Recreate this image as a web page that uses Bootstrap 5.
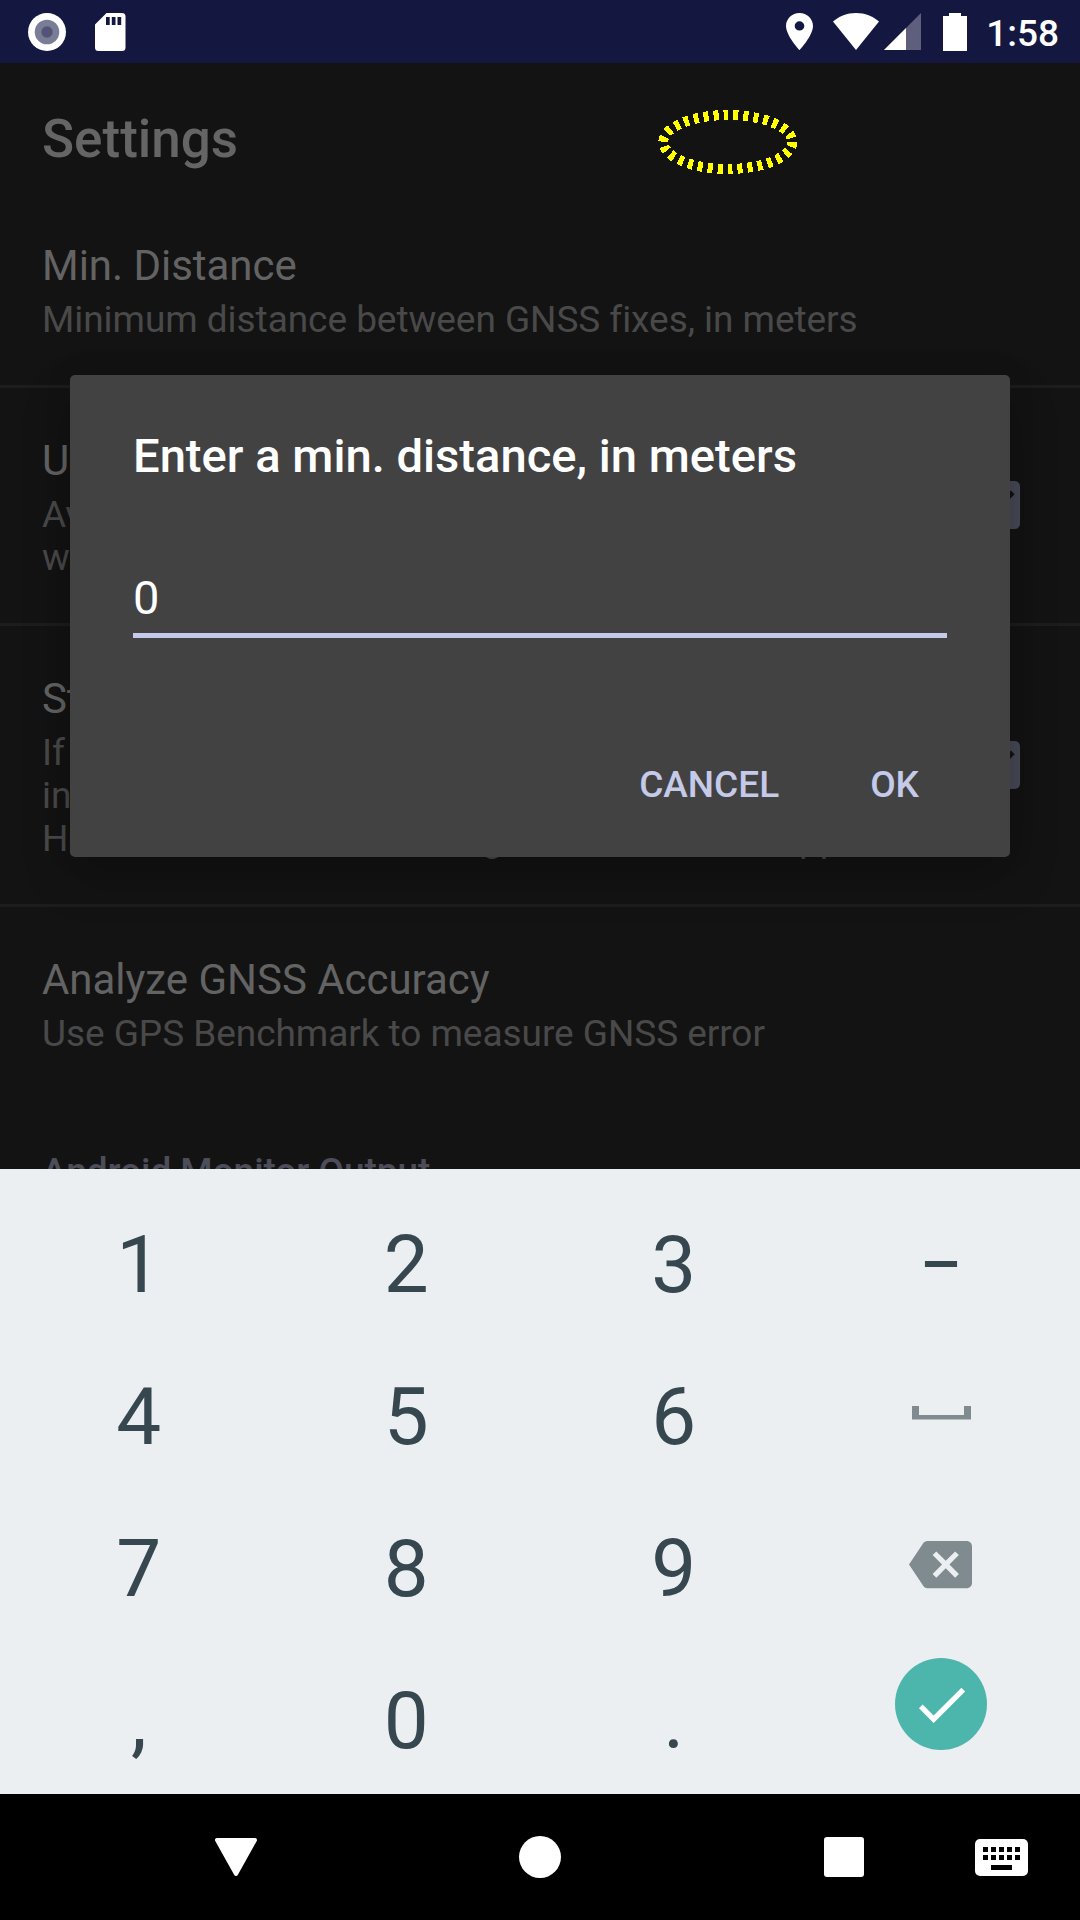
<!DOCTYPE html>
<html lang="en">
<head>
<meta charset="utf-8">
<meta name="viewport" content="width=device-width, initial-scale=1">
<title>Settings</title>
<link href="https://cdn.jsdelivr.net/npm/bootstrap@5.3.0/dist/css/bootstrap.min.css" rel="stylesheet">
<style>
  body { background: #000; font-family: Roboto, "Liberation Sans", sans-serif; }
  svg { display: block; flex: none; }
  .phone { width: 1080px; height: 1920px; }
  .status-bar { height: 63px; background: #141841; padding: 0 21px 0 28px; }
  .sd-icon { margin-left: 29px; }
  .wifi-icon { margin-left: 20px; }
  .cell-icon { margin-left: 5px; }
  .battery-icon { margin-left: 22px; }
  .clock { font-size: 37px; line-height: 63px; font-weight: 500; margin-left: 19px; padding-top: 3px; }
  .screen { height: 1106px; background: #131313; }
  .app-title { height: 147px; padding: 7px 42px 0; font-size: 53px; font-weight: 500; color: #656565; }
  .pref { padding: 48px 42px 44px; border-bottom: 3px solid #1d1d1d; }
  .pref-first { padding-top: 31px; }
  .pref-last { border-bottom: 0; }
  .pref-title { font-size: 42px; line-height: 50px; letter-spacing: -.03px; color: #636363; margin-bottom: 7px; }
  .pref-text { font-size: 37px; line-height: 43px; letter-spacing: -.05px; color: #494949; white-space: nowrap; }
  .pref-text-wide { word-spacing: 2.6px; }
  .pref-check { width: 48px; height: 48px; margin: 0 18px 5px 0; }
  .category { font-size: 37px; line-height: 43px; letter-spacing: -.05px; font-weight: 500; color: #4c4d59; padding: 51px 42px 0; }
  .focus-ring-mark { left: 652px; top: 102px; }
  .dialog-box { left: 70px; top: 375px; width: 940px; height: 482px; background: #424242; border-radius: 5px; box-shadow: 0 20px 50px rgba(0,0,0,.2), 0 0 26px rgba(0,0,0,.12); padding: 53px 63px 0; }
  .dialog-heading { font-size: 47.15px; line-height: 56px; font-weight: 500; }
  .dialog-field { font-size: 47px; line-height: 56px; margin-top: 86px; border-bottom: 5px solid #c5cae9; height: 68px; }
  .dialog-actions { margin-top: 125px; gap: 91px; padding-right: 28px; }
  .dialog-actions button { font-size: 37px; line-height: 44px; font-weight: 500; color: #c5cae9; }
  .keypad { height: 625px; background: #ebeff2; padding: 20px 5px 0 5px; }
  .key { height: 152px; font-size: 80px; line-height: 1; color: #37474f; }
  .key-dash { transform: scaleX(.82); }
  .key-space { margin-bottom: 8px; }
  .key-delete { margin: 0 1px 9px 0; }
  .done-key { width: 92px; height: 92px; background: #4db6ac; margin-bottom: 34px; }
  .nav-keys { height: 126px; }
</style>
</head>
<body>
<div class="phone position-relative overflow-hidden d-flex flex-column">

  <header class="status-bar d-flex align-items-center text-white">
    <svg width="38" height="38" viewBox="0 0 38 38"><circle cx="19" cy="19" r="19" fill="#fff"/><circle cx="19" cy="19" r="12.3" fill="#7b7d97"/><circle cx="19" cy="19" r="5.7" fill="#525475"/></svg>
    <svg class="sd-icon" width="31" height="38" viewBox="0 0 31 38"><path fill="#fff" fill-rule="evenodd" d="M11.500 0H27a3.500 3.500 0 0 1 3.500 3.500V34.500A3.500 3.500 0 0 1 27 38H3.500A3.500 3.500 0 0 1 0 34.500V11.500ZM11 4v8h3.700V4ZM16.800 4v8h3.700V4ZM22.500 4v8h3.700V4Z"/></svg>
    <svg class="ms-auto" width="27" height="37" viewBox="5 2 14 20" preserveAspectRatio="none"><path fill="#fff" d="M12 2C8.130 2 5 5.130 5 9c0 5.250 7 13 7 13s7-7.750 7-13c0-3.870-3.130-7-7-7zm0 9.500a2.500 2.500 0 0 1 0-5 2.500 2.500 0 0 1 0 5z"/></svg>
    <svg class="wifi-icon" width="46" height="37" viewBox="0 0 46 37"><path fill="#fff" d="M23 37 0 8.500C6 3.300 14 0 23 0s17 3.300 23 8.500Z"/></svg>
    <svg class="cell-icon" width="37" height="37" viewBox="0 0 37 37"><path fill="#5d5f7d" d="M37 0v37H0Z"/><path fill="#fff" d="M0 37 22 15v22Z"/></svg>
    <svg class="battery-icon" width="24" height="38" viewBox="0 0 24 38"><path fill="#fff" d="M6 0h12v3h6v35H0V3h6Z"/></svg>
    <span class="clock">1:58</span>
  </header>

  <main class="screen overflow-hidden">
    <h1 class="app-title d-flex align-items-center m-0">Settings</h1>
    <section class="pref pref-first">
      <div class="pref-title">Min. Distance</div>
      <div class="pref-text">Minimum distance between GNSS fixes, in meters</div>
    </section>
    <section class="pref d-flex align-items-center justify-content-between">
      <div>
        <div class="pref-title">Use dark theme</div>
        <div class="pref-text">Avoid bright screens at night<br>when viewing</div>
      </div>
      <svg class="pref-check" viewBox="3 3 18 18"><path fill="#484a57" d="M19 3H5a2 2 0 0 0-2 2v14a2 2 0 0 0 2 2h14a2 2 0 0 0 2-2V5a2 2 0 0 0-2-2zm-9 14-5-5 1.410-1.410L10 14.170l7.590-7.590L19 8l-9 9z"/></svg>
    </section>
    <section class="pref d-flex align-items-center justify-content-between">
      <div>
        <div class="pref-title">Stop GNSS in background</div>
        <div class="pref-text">If checked, GNSS will be stopped when<br>in the background<br>Hence GNSS can be running <span class="pref-text-wide">for use in other apps,</span></div>
      </div>
      <svg class="pref-check" viewBox="3 3 18 18"><path fill="#484a57" d="M19 3H5a2 2 0 0 0-2 2v14a2 2 0 0 0 2 2h14a2 2 0 0 0 2-2V5a2 2 0 0 0-2-2zm-9 14-5-5 1.410-1.410L10 14.170l7.590-7.590L19 8l-9 9z"/></svg>
    </section>
    <section class="pref pref-last">
      <div class="pref-title">Analyze GNSS Accuracy</div>
      <div class="pref-text">Use GPS Benchmark to measure GNSS error</div>
    </section>
    <div class="category">Android Monitor Output</div>
  </main>

  <section class="keypad">
    <div class="row g-0 text-center">
      <div class="col-3 key d-flex align-items-center justify-content-center">1</div>
      <div class="col-3 key d-flex align-items-center justify-content-center">2</div>
      <div class="col-3 key d-flex align-items-center justify-content-center">3</div>
      <div class="col-3 key d-flex align-items-center justify-content-center"><span class="key-dash">–</span></div>
      <div class="col-3 key d-flex align-items-center justify-content-center">4</div>
      <div class="col-3 key d-flex align-items-center justify-content-center">5</div>
      <div class="col-3 key d-flex align-items-center justify-content-center">6</div>
      <div class="col-3 key d-flex align-items-center justify-content-center"><svg class="key-space" width="59" height="14" viewBox="0 0 59 14"><path fill="#808b90" d="M0 0h7v9h45V0h7v13.500H0Z"/></svg></div>
      <div class="col-3 key d-flex align-items-center justify-content-center">7</div>
      <div class="col-3 key d-flex align-items-center justify-content-center">8</div>
      <div class="col-3 key d-flex align-items-center justify-content-center">9</div>
      <div class="col-3 key d-flex align-items-center justify-content-center"><svg class="key-delete" width="63" height="63" viewBox="0 0 24 24"><path fill="#808b90" d="M22 3H7c-.69 0-1.230.35-1.590.88L0 12l5.410 8.110c.36.53.9.89 1.590.89h15c1.100 0 2-.9 2-2V5c0-1.100-.9-2-2-2zm-3 12.590L17.590 17 14 13.410 10.410 17 9 15.590 12.590 12 9 8.410 10.410 7 14 10.590 17.590 7 19 8.410 15.410 12 19 15.590z"/></svg></div>
      <div class="col-3 key d-flex align-items-center justify-content-center">,</div>
      <div class="col-3 key d-flex align-items-center justify-content-center">0</div>
      <div class="col-3 key d-flex align-items-center justify-content-center">.</div>
      <div class="col-3 key d-flex align-items-center justify-content-center"><span class="done-key rounded-circle d-flex align-items-center justify-content-center"><svg width="63" height="63" viewBox="0 0 24 24"><path fill="#fff" d="M9 16.170 4.830 12l-1.420 1.410L9 19 21 7l-1.410-1.410z"/></svg></span></div>
    </div>
  </section>

  <nav class="nav-keys bg-black">
    <svg width="1080" height="126" viewBox="0 0 1080 126"><g fill="#fff"><path stroke="#fff" stroke-width="4" stroke-linejoin="round" d="M217 46h38L236 80Z"/><circle cx="540" cy="63" r="21"/><rect x="824" y="43" width="40" height="40" rx="3"/><rect x="975" y="45" width="53" height="37" rx="5"/></g><path d="M983 53h5v5h-5zM991 53h5v5h-5zM999 53h5v5h-5zM1007 53h5v5h-5zM1015 53h5v5h-5zM983 61h5v5h-5zM991 61h5v5h-5zM999 61h5v5h-5zM1007 61h5v5h-5zM1015 61h5v5h-5zM991 71h21v5h-21z"/></svg>
  </nav>

  <svg class="focus-ring-mark position-absolute" width="152" height="80" viewBox="0 0 152 80"><ellipse cx="75.800" cy="40" rx="64.500" ry="27" fill="none" stroke="#ff0" stroke-width="10" stroke-dasharray="5 5" shape-rendering="crispEdges"/></svg>

  <div class="dialog-box position-absolute text-white" role="dialog">
    <div class="dialog-heading">Enter a min. distance, in meters</div>
    <div class="dialog-field">0</div>
    <div class="dialog-actions d-flex justify-content-end">
      <button class="btn border-0 p-0" type="button">CANCEL</button>
      <button class="btn border-0 p-0" type="button">OK</button>
    </div>
  </div>
</div>
<script src="https://cdn.jsdelivr.net/npm/bootstrap@5.3.0/dist/js/bootstrap.bundle.min.js"></script>
</body>
</html>
